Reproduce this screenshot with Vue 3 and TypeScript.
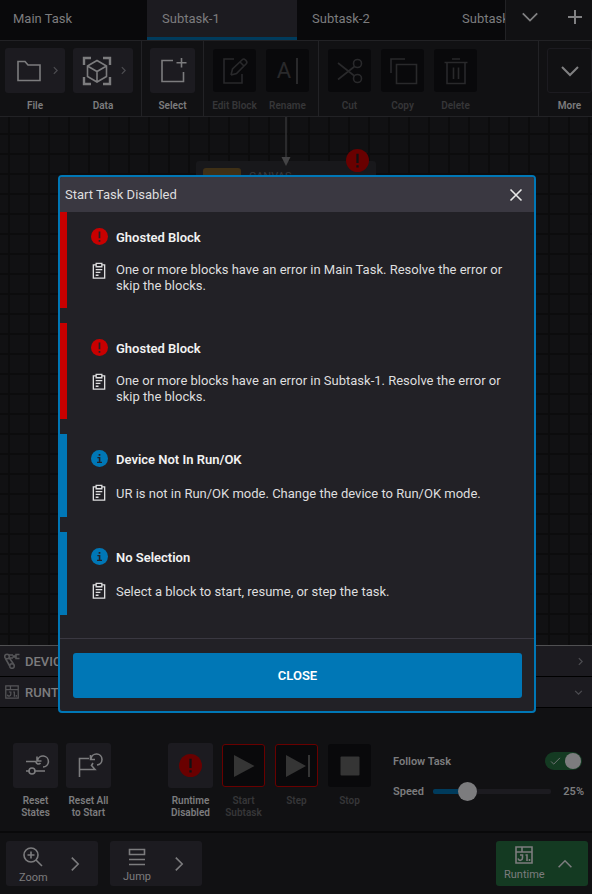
<script setup lang="ts">
import { computed, ref } from 'vue'

interface Tool {
  label: string
  icon: string
  disabled?: boolean
  menu?: boolean
}

interface Notice {
  level: 'error' | 'info'
  title: string
  text: string
}

const tabs = ['Main Task', 'Subtask-1', 'Subtask-2', 'Subtask-3']
const activeTab = ref('Subtask-1')

const toolGroups: Tool[][] = [
  [
    { label: 'File', icon: 'folder', menu: true },
    { label: 'Data', icon: 'data', menu: true },
  ],
  [{ label: 'Select', icon: 'select' }],
  [
    { label: 'Edit Block', icon: 'edit', disabled: true },
    { label: 'Rename', icon: 'rename', disabled: true },
  ],
  [
    { label: 'Cut', icon: 'cut', disabled: true },
    { label: 'Copy', icon: 'copy', disabled: true },
    { label: 'Delete', icon: 'trash', disabled: true },
  ],
]

const notices: Notice[] = [
  {
    level: 'error',
    title: 'Ghosted Block',
    text: 'One or more blocks have an error in Main Task. Resolve the error or skip the blocks.',
  },
  {
    level: 'error',
    title: 'Ghosted Block',
    text: 'One or more blocks have an error in Subtask-1. Resolve the error or skip the blocks.',
  },
  {
    level: 'info',
    title: 'Device Not In Run/OK',
    text: 'UR is not in Run/OK mode. Change the device to Run/OK mode.',
  },
  {
    level: 'info',
    title: 'No Selection',
    text: 'Select a block to start, resume, or step the task.',
  },
]

const dialogOpen = ref(true)
const follow = ref(true)
const speed = ref(25)
const fill = computed(() => ({ '--fill': `${speed.value}%` }))
</script>

<template>
  <div class="app">
    <svg class="sprite" aria-hidden="true">
      <symbol id="folder" viewBox="0 0 30 30"><path d="M4 5.5H11L14 9H26V24.5H4Z" /></symbol>
      <symbol id="data" viewBox="0 0 30 30">
        <path stroke-width="2.4" d="M2 9V2H9M21 2H28V9M28 21V28H21M9 28H2V21" />
        <path d="M15 4.500L24.500 10V20.500L15 26L5.500 20.500V10ZM5.500 10L15 15.500L24.500 10M15 15.500V26" />
      </symbol>
      <symbol id="select" viewBox="0 0 30 30">
        <path d="M15 4.500H4V25.500H25.500V16M23.500 2V11.500M18.500 6.700H28.500" />
      </symbol>
      <symbol id="edit" viewBox="0 0 30 30">
        <path d="M14 3H4V27H22V18M11 19L12.500 13L22.500 3.500C24 2 28 5.500 26.500 7.500L16.500 17.500L11 19M20 6L24.500 10.500" />
      </symbol>
      <symbol id="cut" viewBox="0 0 30 30">
        <path d="M3 7L19.500 20M3 23.500L19.500 10.500" />
        <circle cx="22.500" cy="7.500" r="4" /><circle cx="22.500" cy="22.500" r="4" />
      </symbol>
      <symbol id="copy" viewBox="0 0 30 30"><path d="M8.500 8.500H28.500V27.500H8.500ZM3 17V3H17" /></symbol>
      <symbol id="trash" viewBox="0 0 30 30">
        <path d="M3.500 6.500H26.500M11 3H19M6 6.500V27.500H24V6.500M12.500 11.500V23M17.500 11.500V23" />
      </symbol>
      <symbol id="reset-states" viewBox="0 0 30 30">
        <path d="M5 10.500H15M5 20H8M14 20H24M16 5.500V10H20.500M16.500 9.500A5.500 5.500 0 1 1 22 16M15 10.500A2.500 2.500 0 0 0 19.500 12" />
        <circle cx="11" cy="20" r="3" />
      </symbol>
      <symbol id="reset-all" viewBox="0 0 30 30">
        <path d="M5.500 26V7.500H15M5.500 18.500H21L17.500 14.500L19 12M16.500 4V8.500H21M17 8A5.500 5.500 0 1 1 23 14" />
      </symbol>
      <symbol id="alert" viewBox="0 0 24 24">
        <circle class="disc" cx="12" cy="12" r="12" />
        <path class="mark" d="M10.800 5H13.200V14.500H10.800ZM10.800 17H13.200V19.300H10.800Z" />
      </symbol>
      <symbol id="info" viewBox="0 0 24 24">
        <circle class="disc" cx="12" cy="12" r="12" />
        <path class="mark" d="M10.800 5.500H13.200V8H10.800ZM9 10H13.200V16.500H15.500V18.300H8.500V16.500H11V11.800H9Z" />
      </symbol>
      <symbol id="clipboard" viewBox="0 0 16 18">
        <path d="M5 3H2V17H14V3H11M5 1.500H11V5H5ZM4.500 8H11.500M4.500 11H9.500M4.500 14H7.500" />
      </symbol>
      <symbol id="chev-down" viewBox="0 0 20 12"><path d="M2 2L10 10L18 2" /></symbol>
      <symbol id="chev-up" viewBox="0 0 20 12"><path d="M2 10L10 2L18 10" /></symbol>
      <symbol id="chev-right" viewBox="0 0 12 20"><path d="M2 2L10 10L2 18" /></symbol>
      <symbol id="plus" viewBox="0 0 16 16"><path d="M8 1V15M1 8H15" /></symbol>
      <symbol id="cross" viewBox="0 0 14 14"><path d="M1.500 1.500L12.500 12.500M12.500 1.500L1.500 12.500" /></symbol>
      <symbol id="robot" viewBox="0 0 16 16">
        <circle cx="3" cy="3.500" r="2.300" /><circle cx="8" cy="13" r="2.300" />
        <path d="M1.500 5.500L5.700 13M5 4.500L9.500 11M5 2H9M5 5H9" />
        <path stroke-width="2.6" d="M8.500 3.500H12" />
        <path d="M15.500 1.500H12V5.500H15.500" />
      </symbol>
      <symbol id="runtime" viewBox="0 0 18 18">
        <path d="M1 1H17V17H1ZM1 6H17M7 1V6M3 12.500C4 15.500 7.500 14.500 7.500 12V9H5M10.500 9H12V15M14.500 13V15" />
      </symbol>
      <symbol id="zoom" viewBox="0 0 20 20">
        <circle cx="8" cy="8" r="7" /><path d="M13 13L19 19M8 4.500V11.500M4.500 8H11.500" />
      </symbol>
      <symbol id="jump" viewBox="0 0 18 18"><path d="M1.500 1.500H16.500V6.500H1.500ZM1 11.500H17M1 16.500H17" /></symbol>
      <symbol id="check" viewBox="0 0 12 9"><path d="M1 5L4 8L11 1" /></symbol>
    </svg>

    <nav class="tabs">
      <div class="tab-list" role="tablist">
        <button
          v-for="tab in tabs"
          :key="tab"
          class="tab"
          :class="{ active: tab === activeTab }"
          role="tab"
          :aria-selected="tab === activeTab"
          @click="activeTab = tab"
        >{{ tab }}</button>
      </div>
      <div class="tab-actions">
        <button aria-label="All tabs"><svg class="icon i-chev bright"><use href="#chev-down" /></svg></button>
        <button aria-label="Add subtask"><svg class="icon i-plus bright"><use href="#plus" /></svg></button>
      </div>
    </nav>

    <div class="toolbar" role="toolbar" aria-label="Task tools">
      <div v-for="(group, g) in toolGroups" :key="g" class="group">
        <button
          v-for="tool in group"
          :key="tool.label"
          class="tool"
          :class="{ wide: tool.menu }"
          :disabled="tool.disabled"
        >
          <span class="tile">
            <span v-if="tool.icon === 'rename'" class="rename" aria-hidden="true">A</span>
            <svg v-else class="icon i-30"><use :href="`#${tool.icon}`" /></svg>
            <svg v-if="tool.menu" class="icon i-caret"><use href="#chev-right" /></svg>
          </span>
          <span class="caption">{{ tool.label }}</span>
        </button>
      </div>
      <div class="group last">
        <button class="tool">
          <span class="tile outlined"><svg class="icon i-chev-lg bright"><use href="#chev-down" /></svg></span>
          <span class="caption">More</span>
        </button>
      </div>
    </div>

    <main class="canvas">
      <svg class="arrow" viewBox="0 0 10 49" aria-hidden="true">
        <path class="shaft" d="M5 0V42" /><path class="head" d="M0.500 40H9.500L5 49Z" />
      </svg>
      <div class="node">
        <span class="chip"></span><span>CANVAS</span>
        <svg class="node-alert"><use href="#alert" /></svg>
      </div>
    </main>

    <section class="panels">
      <button class="row">
        <svg class="icon i-16"><use href="#robot" /></svg><span>DEVICES</span>
        <svg class="icon i-caret end"><use href="#chev-right" /></svg>
      </button>
      <button class="row">
        <svg class="icon i-14"><use href="#runtime" /></svg><span>RUNTIME</span>
        <svg class="icon i-caret-down end"><use href="#chev-down" /></svg>
      </button>
      <div class="runtime">
        <div class="set">
          <button class="tool">
            <span class="tile"><svg class="icon i-30"><use href="#reset-states" /></svg></span>
            <span class="caption">Reset<br />States</span>
          </button>
          <button class="tool">
            <span class="tile"><svg class="icon i-30"><use href="#reset-all" /></svg></span>
            <span class="caption">Reset All<br />to Start</span>
          </button>
        </div>
        <div class="set run">
          <button class="tool">
            <span class="tile"><svg class="run-alert"><use href="#alert" /></svg></span>
            <span class="caption">Runtime<br />Disabled</span>
          </button>
          <button class="tool blocked" disabled>
            <span class="tile"><svg class="solid" viewBox="0 0 30 30"><path d="M5 4L25.500 15L5 26Z" /></svg></span>
            <span class="caption">Start<br />Subtask</span>
          </button>
          <button class="tool blocked" disabled>
            <span class="tile"><svg class="solid" viewBox="0 0 30 30"><path d="M4 4L24 15L4 26ZM26 4H28V26H26Z" /></svg></span>
            <span class="caption">Step</span>
          </button>
          <button class="tool" disabled>
            <span class="tile"><svg class="solid" viewBox="0 0 30 30"><rect x="5.500" y="5.500" width="19" height="19" rx="1" /></svg></span>
            <span class="caption">Stop</span>
          </button>
        </div>
        <div class="options">
          <label class="option follow">
            <span>Follow Task</span>
            <span class="switch">
              <input v-model="follow" type="checkbox" />
              <svg class="icon check"><use href="#check" /></svg>
            </span>
          </label>
          <div class="option">
            <label for="speed">Speed</label>
            <input id="speed" v-model.number="speed" class="slider" type="range" min="0" max="100" :style="fill" />
            <output for="speed">{{ speed }}%</output>
          </div>
        </div>
      </div>
    </section>

    <footer class="footer">
      <button class="foot">
        <span class="stack"><svg class="icon i-20"><use href="#zoom" /></svg><span>Zoom</span></span>
        <svg class="icon i-next"><use href="#chev-right" /></svg>
      </button>
      <button class="foot">
        <span class="stack"><svg class="icon i-18"><use href="#jump" /></svg><span>Jump</span></span>
        <svg class="icon i-next"><use href="#chev-right" /></svg>
      </button>
      <button class="foot green">
        <span class="stack"><svg class="icon i-18"><use href="#runtime" /></svg><span>Runtime</span></span>
        <svg class="icon i-up"><use href="#chev-up" /></svg>
      </button>
    </footer>

    <div v-if="dialogOpen" class="backdrop">
      <div class="dialog" role="dialog" aria-modal="true" aria-labelledby="dialog-title">
        <header class="dialog-head">
          <h2 id="dialog-title">Start Task Disabled</h2>
          <button aria-label="Dismiss" @click="dialogOpen = false"><svg class="icon i-14"><use href="#cross" /></svg></button>
        </header>
        <ul class="notices">
          <li v-for="(notice, n) in notices" :key="n" class="notice" :class="notice.level">
            <svg class="badge"><use :href="notice.level === 'error' ? '#alert' : '#info'" /></svg>
            <h3>{{ notice.title }}</h3>
            <svg class="icon clip"><use href="#clipboard" /></svg>
            <p>{{ notice.text }}</p>
          </li>
        </ul>
        <div class="dialog-foot">
          <button class="close" @click="dialogOpen = false">CLOSE</button>
        </div>
      </div>
    </div>
  </div>
</template>

<style>
body {
  background: #111113;
}
</style>

<style scoped>
* {
  box-sizing: border-box;
}
.app {
  display: flex;
  flex-direction: column;
  min-height: 100vh;
  overflow: hidden;
  background: #111113;
  color: #7c7c7e;
  font-family: Roboto, "Liberation Sans", sans-serif;
  font-size: 13px;
}
button {
  margin: 0;
  padding: 0;
  border: 0;
  background: none;
  color: inherit;
  font: inherit;
}
.sprite {
  position: absolute;
  width: 0;
  height: 0;
}
.icon {
  flex: none;
  fill: none;
  stroke: currentColor;
  stroke-width: 1.6;
}
.bright { color: #808082; stroke-width: 2; }
.i-30 { width: 30px; height: 30px; }
.i-20 { width: 20px; height: 20px; }
.i-18 { width: 18px; height: 18px; }
.i-16 { width: 16px; height: 16px; }
.i-14 { width: 14px; height: 14px; }
.i-plus { width: 16px; height: 16px; }
.i-chev { width: 18px; height: 12px; }
.i-chev-lg { width: 20px; height: 12px; }
.i-caret { width: 5px; height: 9px; stroke-width: 3; color: #4c4c50; }
.i-caret-down { width: 9px; height: 5px; stroke-width: 3; color: #4c4c50; }
.i-next { width: 10px; height: 16px; stroke-width: 2; }
.i-up { width: 16px; height: 10px; stroke-width: 2; }

.tabs {
  display: flex;
  height: 41px;
  border-bottom: 1px solid #222225;
  background: #09090b;
}
.tab-list {
  display: flex;
  flex: 1;
  min-width: 0;
  overflow: hidden;
}
.tab {
  flex: none;
  width: 150px;
  padding: 0 15px;
  border-bottom: 3px solid transparent;
  text-align: left;
  white-space: nowrap;
}
.tab:first-child {
  width: 147px;
  padding-left: 13px;
}
.tab.active {
  border-bottom-color: #003b5c;
  background: #1c1b20;
}
.tab-actions {
  display: flex;
  gap: 28px;
  align-items: center;
  padding: 0 9px 6px 15px;
  border-left: 1px solid #222225;
  background: #111113;
}
.tab-actions button {
  display: flex;
}

.toolbar {
  display: flex;
  height: 76px;
  border-bottom: 1px solid #222225;
}
.group {
  display: flex;
  gap: 8px;
  padding: 7px 8px 0;
  border-right: 1px solid #222225;
}
.group:first-child {
  padding-left: 5px;
}
.group:nth-child(4) {
  border-right: 0;
}
.group.last {
  margin-left: auto;
  padding-right: 0;
  border-right: 0;
  border-left: 1px solid #222225;
}
.tool {
  display: flex;
  flex-direction: column;
  align-items: center;
  width: 45px;
  white-space: nowrap;
}
.tool.wide {
  width: 60px;
}
.tile {
  display: flex;
  align-items: center;
  justify-content: center;
  width: 100%;
  height: 45px;
  border-radius: 3px;
  background: #1c1b20;
}
.wide .tile {
  justify-content: space-between;
  padding: 0 7px 0 9px;
}
.tile.outlined {
  border: 1px solid #1c1b20;
  background: none;
}
.rename {
  padding-right: 5px;
  border-right: 2px solid #29292b;
  color: #29292b;
  font-size: 22px;
  line-height: 26px;
}
.caption {
  display: flex;
  justify-content: center;
  margin-top: 7px;
  font-size: 10px;
  font-weight: 600;
  line-height: 12px;
}
.tool:disabled {
  color: #363638;
}
.tool:disabled .tile {
  width: 43px;
  height: 43px;
  margin: 1px;
  background: #09090b;
}
.tool:disabled .icon {
  color: #29292b;
}

.canvas {
  position: relative;
  flex: 1;
  background-color: #111113;
  background-image: linear-gradient(90deg, #0c0c0d 2px, transparent 2px), linear-gradient(#0c0c0d 2px, transparent 2px);
  background-position: 8px 16px;
  background-size: 20px 20px;
}
.arrow {
  position: absolute;
  z-index: 1;
  top: 0;
  left: 281px;
  width: 10px;
  height: 49px;
}
.shaft { stroke: #444446; }
.head { fill: #444446; }
.node {
  position: absolute;
  top: 44px;
  left: 196px;
  display: flex;
  gap: 8px;
  width: 180px;
  height: 60px;
  padding: 7px;
  border-radius: 3px;
  background: #18181b;
  color: #39393c;
  font-size: 11px;
  line-height: 18px;
}
.chip {
  width: 38px;
  height: 30px;
  border-radius: 3px;
  background: #3f3016;
}
.node-alert {
  position: absolute;
  top: -12px;
  right: 7px;
  width: 23px;
  height: 23px;
}
.node-alert, .run-alert {
  --disc: #690000;
  --mark: #111113;
}
.run-alert {
  width: 23px;
  height: 23px;
}
.disc { fill: var(--disc); }
.mark { fill: var(--mark); }

.panels {
  border-top: 1px solid #505052;
}
.row {
  display: flex;
  gap: 5px;
  align-items: center;
  width: 100%;
  height: 31px;
  padding: 0 9px 0 4px;
  border-bottom: 1px solid #000;
  background: #1c1b20;
  font-weight: 500;
}
.row .i-14 { margin: 0 1px; }
.row .icon:first-child { color: #555558; }
.end { margin-left: auto; }
.runtime {
  display: flex;
  padding: 35px 8px 12px 13px;
  border-bottom: 2px solid #09090a;
}
.set {
  display: flex;
  flex: none;
  gap: 8px;
}
.run {
  margin-left: 57px;
}
.runtime .caption {
  display: block;
  height: 24px;
  text-align: center;
}
.tool.blocked .tile {
  border: 1px solid #690000;
}
.solid {
  width: 30px;
  height: 30px;
  fill: #353535;
}
.options {
  display: flex;
  flex: 1;
  flex-direction: column;
  gap: 12px;
  min-width: 0;
  padding-top: 9px;
  padding-left: 21px;
}
.option {
  display: flex;
  align-items: center;
  height: 18px;
  font-size: 11px;
  font-weight: 600;
}
.follow {
  justify-content: space-between;
}
.switch {
  position: relative;
  display: flex;
  margin-right: 2px;
}
.switch input {
  display: flex;
  align-items: center;
  justify-content: flex-end;
  width: 37px;
  height: 18px;
  margin: 0;
  padding: 1px;
  border-radius: 9px;
  background: #143a22;
  appearance: none;
}
.switch input::before {
  width: 16px;
  height: 16px;
  border-radius: 50%;
  background: #7c7c7e;
  content: "";
}
.check {
  position: absolute;
  top: 5px;
  left: 5px;
  width: 11px;
  height: 8px;
  stroke-width: 1;
}
.slider {
  flex: 1;
  min-width: 0;
  height: 19px;
  margin: 0 12px 0 9px;
  background: none;
  appearance: none;
}
.slider::-webkit-slider-runnable-track {
  height: 5px;
  border-radius: 2px;
  background: linear-gradient(90deg, #003b5c var(--fill), #1c1b20 var(--fill));
}
.slider::-webkit-slider-thumb {
  width: 19px;
  height: 19px;
  margin-top: -7px;
  border-radius: 50%;
  background: #7c7c7e;
  appearance: none;
}

.footer {
  display: flex;
  gap: 12px;
  padding: 8px 4px 8px 6px;
}
.foot {
  display: flex;
  align-items: center;
  justify-content: space-between;
  width: 92px;
  height: 45px;
  padding: 0 18px 0 13px;
  border-radius: 3px;
  background: #1c1b20;
  font-size: 11px;
}
.foot.green {
  margin-left: auto;
  padding: 0 15px 0 8px;
  background: #143a22;
}
.stack {
  display: flex;
  flex-direction: column;
  gap: 4px;
  align-items: center;
  padding-top: 4px;
  line-height: 13px;
}
.green .stack {
  padding-top: 0;
}

.backdrop {
  position: fixed;
  z-index: 2;
  inset: 0;
  display: flex;
  align-items: center;
  padding: 0 56px 6px 58px;
}
.dialog {
  flex: 1;
  overflow: hidden;
  border: 2px solid #0077b6;
  border-radius: 4px;
  background: #222126;
  color: #dededf;
}
.dialog-head {
  display: flex;
  align-items: center;
  justify-content: space-between;
  height: 35px;
  padding: 0 11px 0 5px;
  background: #3a3841;
}
.dialog-head button {
  display: flex;
}
.dialog-head .icon {
  color: #e8e8e8;
}
h2, h3, p, ul {
  margin: 0;
  padding: 0;
  font-size: 13px;
  font-weight: 400;
}
.notices {
  display: flex;
  flex-direction: column;
  gap: 15px;
  padding-bottom: 23px;
  border-bottom: 1px solid #3a3841;
  list-style: none;
}
.notice {
  display: grid;
  grid-template-columns: 17px 1fr;
  grid-auto-rows: minmax(19px, auto);
  gap: 15px 8px;
  padding: 16px 26px 14px 24px;
  border-left: 7px solid var(--disc);
  --mark: #222126;
}
.notice.error { --disc: #c80000; }
.notice.info { --disc: #0077b6; }
.badge {
  width: 17px;
  height: 17px;
}
h3 {
  color: #f2f2f2;
  font-weight: 600;
  line-height: 19px;
}
.clip {
  width: 16px;
  height: 17px;
  stroke-width: 1.4;
}
p {
  align-self: center;
  line-height: 16px;
}
.dialog-foot {
  padding: 14px 12px 13px 13px;
}
.close {
  display: block;
  width: 100%;
  height: 45px;
  border-radius: 3px;
  background: #0077b6;
  color: #fff;
  font-weight: 600;
}
</style>
